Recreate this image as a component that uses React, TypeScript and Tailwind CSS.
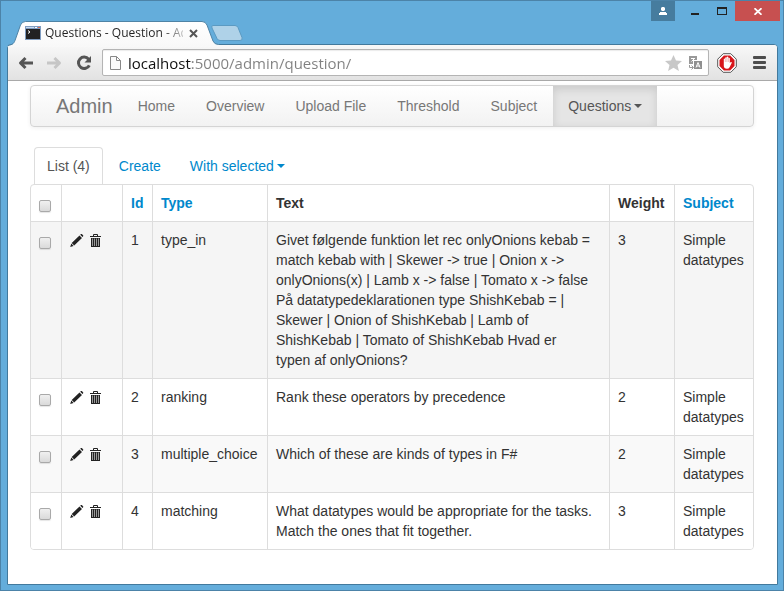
import { useState } from "react";

type Question = {
  id: number;
  type: string;
  text: string;
  weight: number;
  subject: string;
  shade: string;
};

const questions: Question[] = [
  {
    id: 1,
    type: "type_in",
    text: "Givet følgende funktion let rec onlyOnions kebab = match kebab with | Skewer -> true | Onion x -> onlyOnions(x) | Lamb x -> false | Tomato x -> false På datatypedeklarationen type ShishKebab = | Skewer | Onion of ShishKebab | Lamb of ShishKebab | Tomato of ShishKebab Hvad er typen af onlyOnions?",
    weight: 3,
    subject: "Simple datatypes",
    shade: "bg-[#f5f5f5]",
  },
  { id: 2, type: "ranking", text: "Rank these operators by precedence", weight: 2, subject: "Simple datatypes", shade: "bg-white" },
  { id: 3, type: "multiple_choice", text: "Which of these are kinds of types in F#", weight: 2, subject: "Simple datatypes", shade: "bg-[#f9f9f9]" },
  {
    id: 4,
    type: "matching",
    text: "What datatypes would be appropriate for the tasks. Match the ones that fit together.",
    weight: 3,
    subject: "Simple datatypes",
    shade: "bg-white",
  },
];

const navItems = ["Home", "Overview", "Upload File", "Threshold", "Subject"];

function Caret() {
  return (
    <svg width="8" height="4" viewBox="0 0 8 4" fill="currentColor" aria-hidden="true">
      <path d="M0 0h8L4 4z" />
    </svg>
  );
}

function PencilIcon() {
  return (
    <svg width="14" height="14" viewBox="0 0 14 14" fill="#222" aria-hidden="true">
      <path d="M10.200.8l.5-.5c.5-.4 1-.4 1.400 0l.9.9c.4.4.4.9 0 1.400l-.5.5zM9.500 1.400l2.500 2.500-7.800 7.700-2.500-2.500zM1.300 9.600l2.300 2.300L.2 13z" />
    </svg>
  );
}

function TrashIcon() {
  return (
    <svg width="14" height="14" viewBox="0 0 14 14" fill="none" aria-hidden="true">
      <path d="M3.500 2V.5h4V2" stroke="#222" />
      <path d="M0 2h11v1H0z" fill="#222" />
      <path d="M1 4h9v9H1z" fill="#222" />
      <path d="M2.500 4.500v7.500M4.500 4.500v7.500M6.500 4.500v7.500M8.500 4.500v7.500" stroke="#999" />
    </svg>
  );
}

function Check({ label, checked, onChange }: { label: string; checked: boolean; onChange: () => void }) {
  return (
    <input
      type="checkbox"
      aria-label={label}
      checked={checked}
      onChange={onChange}
      className="mt-[7px] block h-3 w-3 appearance-none rounded-xs border border-[#a9a9a9] bg-linear-to-b from-[#f0f0f0] to-[#dadada] shadow-[0_1px_1px_#0000001a] checked:from-[#8a8a8a] checked:to-[#6a6a6a]"
    />
  );
}

function TabStrip() {
  return (
    <header className="-mr-0.5 flex h-[43px] shrink-0 pl-1">
      <div className="relative z-10 mt-5 flex h-6 w-[208px] items-center">
        <svg className="absolute -left-1 top-0" width="212" height="26" viewBox="0 0 212 26" aria-hidden="true">
          <defs>
            <linearGradient id="tab" x1="0" y1="0" x2="0" y2="1">
              <stop offset="0" stopColor="#fff" />
              <stop offset="1" stopColor="#f8f8f8" />
            </linearGradient>
          </defs>
          <path d="M0 26C6 24 7 22 8 19.500L13.500 4Q15 .5 18.500 .5H195Q198.500 .5 200 4L206 20Q207.500 23.500 211.500 23.500V26Z" fill="url(#tab)" />
          <path d="M1 24.500C6 23.500 7 22 8 19.500L13.500 4Q15 .5 18.500 .5H195Q198.500 .5 200 4L206 20Q207.500 23.500 211.500 23.500" fill="none" stroke="#4f83a5" />
        </svg>
        <svg className="relative ml-3.5 shrink-0" width="16" height="14" viewBox="0 0 16 14" aria-hidden="true">
          <path d="M0 0h16v14H0z" fill="#7f9cc0" />
          <path d="M1 1h8v1H1z" fill="#c8dcf2" />
          <path d="M10 1h2v1h-2z" fill="#fff" />
          <path d="M13 1h2v1h-2z" fill="#dc6a50" />
          <path d="M1 3h14v10H1z" fill="#222" />
          <path d="M3 4.500L5 6 3 7.500" fill="none" stroke="#fff" />
        </svg>
        <span className="relative ml-1 w-[138px] whitespace-nowrap bg-linear-to-r from-[#222] from-85% to-[#2224] bg-clip-text font-['Open_Sans','Noto_Sans',sans-serif] text-xs leading-5 text-transparent">
          Questions - Question - Ad
        </span>
        <button aria-label="Close tab" className="relative ml-1.5">
          <svg width="9" height="9" viewBox="0 0 9 9" fill="none" stroke="#555" strokeWidth="2" aria-hidden="true">
            <path d="M1 1l7 7M8 1L1 8" />
          </svg>
        </button>
      </div>
      <button aria-label="New tab" className="-ml-2 mt-6 h-4 w-8">
        <svg width="32" height="16" viewBox="0 0 32 16" aria-hidden="true">
          <path d="M2 .5h22q2 0 3 2l4 10q1 3-2 3H9q-2 0-3-2L1 3Q0 .5 2 .5z" fill="#afd2e8" stroke="#5b9ac2" />
        </svg>
      </button>
      <div className="ml-auto flex h-5">
        <button aria-label="User" className="flex w-6 items-center justify-center bg-[#467c9e]">
          <svg width="8" height="8" viewBox="0 0 8 8" fill="#fff" aria-hidden="true">
            <path d="M2.500 0h3v1h.5v2h-.5v1h-3V3H2V1h.5zM1 5h6v1h1v2H0V6h1z" />
          </svg>
        </button>
        <button aria-label="Minimize" className="flex w-10 justify-center pt-3">
          <svg width="8" height="2" aria-hidden="true"><path d="M0 0h8v2H0z" fill="#222" /></svg>
        </button>
        <button aria-label="Maximize" className="flex w-5 items-center pl-0.5">
          <svg width="10" height="8" viewBox="0 0 10 8" aria-hidden="true"><path fillRule="evenodd" d="M0 0h10v8H0zM1 2v5h8V2z" fill="#222" /></svg>
        </button>
        <button aria-label="Close" className="flex w-[45px] items-center justify-center bg-[#c75050]">
          <svg width="8" height="7" viewBox="0 0 8 7" fill="none" stroke="#fff" strokeWidth="1.700" aria-hidden="true"><path d="M.5.2l7 6.600M7.500.2l-7 6.600" /></svg>
        </button>
      </div>
    </header>
  );
}

function Toolbar() {
  const [url, setUrl] = useState("localhost:5000/admin/question/");
  return (
    <div className="flex h-9 shrink-0 items-center rounded-t-[3px] border-b border-[#a9a9a9] bg-linear-to-b from-[#f8f8f8] to-[#e2e2e2] px-2.5">
      <button aria-label="Back">
        <svg width="16" height="14" viewBox="0 0 16 14" fill="none" stroke="#555" strokeWidth="3" aria-hidden="true"><path d="M15 7H3M7.500 2L2.500 7l5 5" strokeLinejoin="round" /></svg>
      </button>
      <button aria-label="Forward" className="ml-[13px]">
        <svg width="16" height="14" viewBox="0 0 16 14" fill="none" stroke="#c6c6c6" strokeWidth="3" aria-hidden="true"><path d="M0 7H12M7.500 2L12.500 7l-5 5" strokeLinejoin="round" /></svg>
      </button>
      <button aria-label="Reload" className="ml-[13px]">
        <svg width="16" height="16" viewBox="0 0 16 16" aria-hidden="true">
          <path d="M12.600 4.200A5.700 5.700 0 1 0 13.300 10.300" fill="none" stroke="#555" strokeWidth="3" />
          <path d="M15 1v6.500H8.500z" fill="#555" />
        </svg>
      </button>
      <div className="ml-2.5 flex h-[27px] min-w-0 flex-1 items-center rounded-xs border border-[#b4b4b4] bg-white px-1.5 shadow-[inset_0_1px_1px_#00000014]">
        <svg width="13" height="16" viewBox="0 0 13 16" fill="none" stroke="#888" className="shrink-0" aria-hidden="true">
          <path d="M1.500 1.500h6l4 4v9h-10zM7.500 1.500v4h4" fill="#fafafa" />
        </svg>
        <input
          type="text"
          aria-label="Address"
          value={url}
          onChange={(e) => setUrl(e.target.value)}
          className="ml-1.5 h-6 min-w-0 flex-1 bg-[linear-gradient(to_right,#111_64px,#808080_64px)] bg-clip-text font-['Open_Sans','Noto_Sans',sans-serif] text-[15px] text-transparent caret-black outline-none"
        />
        <button aria-label="Bookmark">
          <svg width="17" height="16" viewBox="0 0 17 16" fill="#c8c8c8" aria-hidden="true"><path d="M8.500 0l2.500 5.400 6 .6-4.500 4 1.400 6-5.400-3.200L3.100 16l1.400-6L0 6l6-.6z" /></svg>
        </button>
        <button aria-label="Translate" className="ml-1.5">
          <svg width="14" height="14" viewBox="0 0 14 14" aria-hidden="true">
            <path d="M1 0h8v4H5v4H1z" fill="#999" />
            <path d="M3 2.500h4M3.500 5.500L6 3" stroke="#fff" fill="none" />
            <path d="M6 5h8v8H6z" fill="#8f8f8f" />
            <path d="M8 11.500l2-5 2 5M8.700 10h2.600" stroke="#fff" fill="none" />
            <path d="M1.500 9v2.500H5M3.500 9.500l2 2-2 2" stroke="#999" fill="none" />
          </svg>
        </button>
      </div>
      <button aria-label="AdBlock" className="ml-2">
        <svg width="20" height="20" viewBox="0 0 20 20" aria-hidden="true">
          <path d="M6.200.7h7.600l5.500 5.500v7.600l-5.500 5.500H6.200L.7 13.800V6.200z" fill="#fff" stroke="#555" />
          <path d="M6.900 2.500h6.200l4.400 4.400v6.200l-4.400 4.400H6.900l-4.400-4.400V6.900z" fill="#d8161b" />
          <path d="M6.800 9V6q.7-1 1.400 0V4.700q.8-1 1.500 0V4q.8-1 1.600 0v1q.8-.8 1.500.2V10l1-.9q1-.3 1 .6l-2.200 4.500q-.8 1.600-2.600 1.600-3.200 0-3.200-3z" fill="#fff" />
          <path d="M8.300 6v3M9.900 5v4M11.400 5v4" stroke="#e27a7a" strokeWidth=".5" />
        </svg>
      </button>
      <button aria-label="Menu" className="ml-4">
        <svg width="14" height="14" viewBox="0 0 14 14" fill="#4d4d4d" aria-hidden="true">
          <rect y="0" width="13" height="3" rx="1" />
          <rect y="5" width="13" height="3" rx="1" />
          <rect y="10" width="13" height="3" rx="1" />
        </svg>
      </button>
    </div>
  );
}

export default function App() {
  const [selected, setSelected] = useState<number[]>([]);
  const toggle = (id: number) =>
    setSelected((s) => (s.includes(id) ? s.filter((n) => n !== id) : [...s, id]));
  const all = selected.length === questions.length;
  const cell = "border-t border-l border-[#ddd] p-2 align-top";
  const head = "border-l border-[#ddd] p-2 text-left font-bold align-top";

  return (
    <div className="flex min-h-screen flex-col border border-[#4c83a8] bg-[#64addb] pr-[5px] pb-[5px] pl-1.5 font-['Liberation_Sans',Arial,sans-serif] text-sm leading-5 text-[#333]">
      <TabStrip />
      <div className="flex flex-1 flex-col rounded-t-sm border border-[#42799c] bg-white">
        <Toolbar />
        <main className="pt-1 pr-[23px] pb-8 pl-[22px]">
          <nav className="flex h-[42px] gap-px rounded-sm border border-[#d4d4d4] bg-linear-to-b from-white to-[#f2f2f2] pl-[25px] text-[#777] shadow-[0_1px_4px_#00000011]">
            <a href="#admin" className="mr-[9px] py-2.5 text-xl leading-5">Admin</a>
            {navItems.map((item) => (
              <a key={item} href={"#" + item} className="px-[15px] py-2.5 whitespace-nowrap">{item}</a>
            ))}
            <button className="flex items-center gap-[3px] bg-[#e5e5e5] px-[15px] text-[#555] shadow-[inset_0_3px_8px_#00000020]">
              Questions
              <Caret />
            </button>
          </nav>

          <div className="mt-5 flex gap-[3px] pl-1 text-[#0088cc]">
            <a href="#list" className="rounded-t-sm border border-b-0 border-[#ddd] px-3 py-2 text-[#555]">List (4)</a>
            <a href="#create" className="border border-b-0 border-transparent px-3 py-2">Create</a>
            <button className="flex items-center gap-[3px] border border-b-0 border-transparent px-3 py-2">
              With selected
              <Caret />
            </button>
          </div>

          <div className="overflow-hidden rounded-sm border border-[#ddd]">
            <table className="w-full table-fixed border-separate border-spacing-0">
              <colgroup>
                <col className="w-[30px]" />
                <col className="w-[61px]" />
                <col className="w-[30px]" />
                <col className="w-[115px]" />
                <col />
                <col className="w-[65px]" />
                <col className="w-[79px]" />
              </colgroup>
              <thead>
                <tr>
                  <th className="p-2 align-top">
                    <Check label="Select all records" checked={all} onChange={() => setSelected(all ? [] : questions.map((q) => q.id))} />
                  </th>
                  <th className={head} aria-label="Actions" />
                  <th className={head}><a href="#id" className="text-[#0088cc]">Id</a></th>
                  <th className={head}><a href="#type" className="text-[#0088cc]">Type</a></th>
                  <th className={head}>Text</th>
                  <th className={head}>Weight</th>
                  <th className={head}><a href="#subject" className="text-[#0088cc]">Subject</a></th>
                </tr>
              </thead>
              <tbody>
                {questions.map((q) => (
                  <tr key={q.id} className={q.shade}>
                    <td className="border-t border-[#ddd] p-2 align-top">
                      <Check label={"Select record " + q.id} checked={selected.includes(q.id)} onChange={() => toggle(q.id)} />
                    </td>
                    <td className={cell}>
                      <div className="flex gap-1.5 pt-1">
                        <a href={"#edit-" + q.id} aria-label="Edit record"><PencilIcon /></a>
                        <button aria-label="Delete record"><TrashIcon /></button>
                      </div>
                    </td>
                    <td className={cell}>{q.id}</td>
                    <td className={cell}>{q.type}</td>
                    <td className="border-t border-l border-[#ddd] py-2 pr-4 pl-2 align-top">{q.text}</td>
                    <td className={cell}>{q.weight}</td>
                    <td className={cell}>{q.subject}</td>
                  </tr>
                ))}
              </tbody>
            </table>
          </div>
        </main>
      </div>
    </div>
  );
}
